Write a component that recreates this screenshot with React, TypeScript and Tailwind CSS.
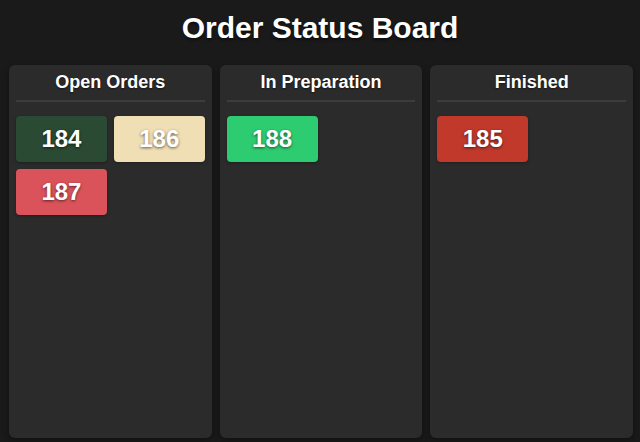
const columns = [
  {
    title: "Open Orders",
    orders: [
      { id: 184, bg: "bg-[#2b4a33]" },
      { id: 186, bg: "bg-[#f0deb4]" },
      { id: 187, bg: "bg-[#db535a]" },
    ],
  },
  { title: "In Preparation", orders: [{ id: 188, bg: "bg-[#2ecc71]" }] },
  { title: "Finished", orders: [{ id: 185, bg: "bg-[#c0392b]" }] },
];

export default function App() {
  return (
    <div className="flex h-[442px] w-[640px] flex-col overflow-hidden bg-[#1a1a1a] font-['Liberation_Sans',Arial,sans-serif] text-white">
      <h1 className="pt-[11px] text-center text-[30px] leading-[34px] font-bold [text-shadow:0_2px_3px_rgba(0,0,0,0.5)]">
        Order Status Board
      </h1>
      <div className="mt-[20px] flex flex-1 gap-2 pr-[7px] pl-[9px] pb-[4px]">
        {columns.map((col) => (
          <div
            key={col.title}
            className="flex w-[203px] flex-col rounded-md bg-[#2b2b2b] px-[7px] pt-[7px] shadow-[0_2px_6px_rgba(0,0,0,0.4)]"
          >
            <h2 className="pb-[8px] text-center text-[18px] leading-[20px] font-bold [text-shadow:0_1px_2px_rgba(0,0,0,0.5)]">
              {col.title}
            </h2>
            <div className="h-[2px] bg-[#3c3c3c]" />
            <div className="mt-[14px] grid grid-cols-2 gap-[7px]">
              {col.orders.map((o) => (
                <div
                  key={o.id}
                  className={`${o.bg} flex h-[46px] items-center justify-center rounded-[4px] text-[24px] font-bold shadow-[0_1px_3px_rgba(0,0,0,0.3)] [text-shadow:0_1px_3px_rgba(0,0,0,0.6)]`}
                >
                  {o.id}
                </div>
              ))}
            </div>
          </div>
        ))}
      </div>
    </div>
  );
}
